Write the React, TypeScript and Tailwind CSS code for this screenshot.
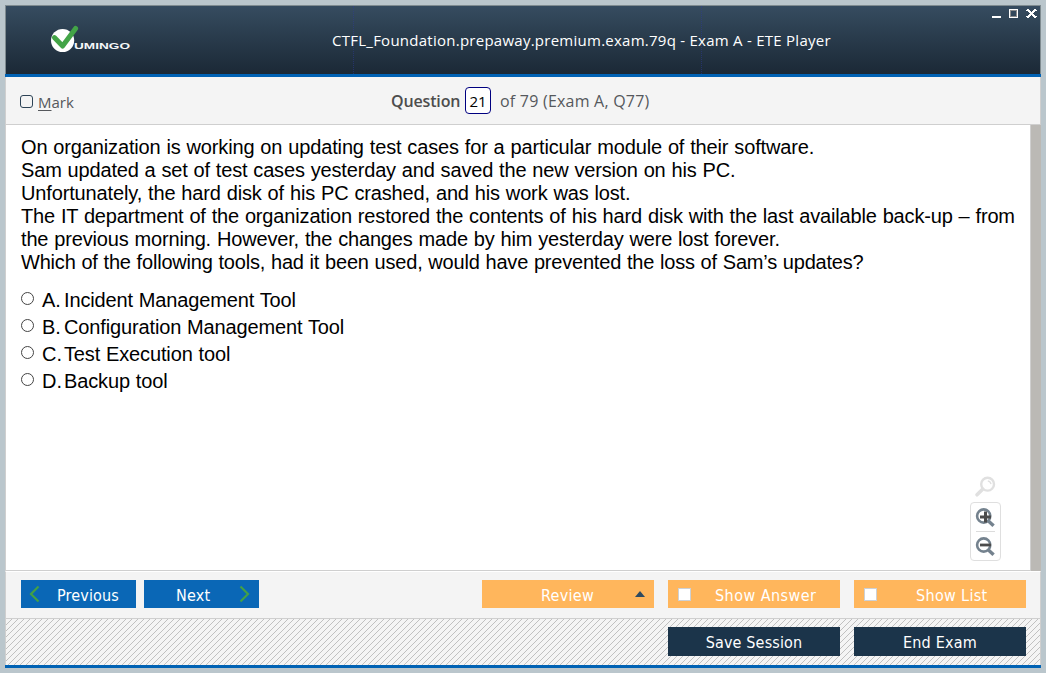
import React from "react";

const seg = "font-['Open_Sans','Noto_Sans',sans-serif]";
const tah = "font-['DejaVu_Sans_Condensed','DejaVu_Sans',sans-serif]";

const lines = [
  { t: "On organization is working on updating test cases for a particular module of their software.", c: "tracking-[-0.143px]" },
  { t: "Sam updated a set of test cases yesterday and saved the new version on his PC.", c: "tracking-[-0.16px]" },
  { t: "Unfortunately, the hard disk of his PC crashed, and his work was lost.", c: "tracking-[-0.14px]" },
  { t: "The IT department of the organization restored the contents of his hard disk with the last available back-up – from", c: "tracking-[-0.157px]" },
  { t: "the previous morning. However, the changes made by him yesterday were lost forever.", c: "tracking-[-0.158px]" },
  { t: "Which of the following tools, had it been used, would have prevented the loss of Sam’s updates?", c: "tracking-[-0.2px]" },
];

const answers = [
  ["A.", "Incident Management Tool"],
  ["B.", "Configuration Management Tool"],
  ["C.", "Test Execution tool"],
  ["D.", "Backup tool"],
];

function Logo() {
  return (
    <svg width="84" height="34" viewBox="0 0 84 34" className="absolute left-[44px] top-[16px]">
      <circle cx="12.6" cy="18.5" r="11.6" fill="#fff" />
      <path d="M4.4 15.6 L12.6 24 L25.6 6.4" fill="none" stroke="#43a447" strokeWidth="5" strokeLinecap="round" strokeLinejoin="round" />
      <text x="24" y="27" fontFamily="Liberation Sans" fontWeight="700" fontSize="9.6" textLength="56" lengthAdjust="spacingAndGlyphs" fill="#f4f6f8">UMINGO</text>
    </svg>
  );
}

function Hatch() {
  return (
    <svg width="1034" height="46" className="absolute left-0 top-0" shapeRendering="crispEdges">
      <defs>
        <pattern id="hatch" width="6" height="6" patternUnits="userSpaceOnUse">
          <path d="M5 0h1v1h-1zM4 1h1v1h-1zM3 2h1v1h-1zM2 3h1v1h-1zM1 4h1v1h-1zM0 5h1v1h-1z" fill="#c0c0c0" />
        </pattern>
      </defs>
      <rect width="1034" height="46" fill="url(#hatch)" />
    </svg>
  );
}

function Chevron({ d }: { d: string }) {
  return (
    <svg width="12" height="18" viewBox="0 0 12 18" className="shrink-0">
      <path d={d} fill="none" stroke="#43a047" strokeWidth="2.2" />
    </svg>
  );
}

function ZoomTools() {
  return (
    <div className="absolute left-[964px] top-[351px] flex w-[31px] flex-col items-center">
      <svg width="24" height="22" viewBox="0 0 24 22" className="mb-[4px]">
        <circle cx="13.6" cy="8.2" r="6.4" fill="none" stroke="#e0e0e0" strokeWidth="2.4" />
        <path d="M13.8 4.8a4 4 0 0 1 3.2 3.4" fill="none" stroke="#e0e0e0" strokeWidth="1.3" />
        <path d="M8.6 13.2L3 18.8" stroke="#e0e0e0" strokeWidth="3.6" strokeLinecap="round" />
      </svg>
      <div className="flex h-[59px] w-[31px] flex-col items-center rounded-[4px] border border-[#dfdfdf] bg-white">
        <svg width="24" height="28" viewBox="0 0 24 28">
          <circle cx="9.7" cy="13" r="6.6" fill="none" stroke="#74828e" strokeWidth="2.6" />
          <path d="M14.4 18l5.2 4.8" stroke="#74828e" strokeWidth="3.4" />
          <path d="M6 14h11M11.5 8.5v11" stroke="#4b4b4b" strokeWidth="3" />
        </svg>
        <div className="h-px w-[19px] bg-[#dcdcdc]" />
        <svg width="24" height="28" viewBox="0 0 24 28">
          <circle cx="9.7" cy="13" r="6.6" fill="none" stroke="#74828e" strokeWidth="2.6" />
          <path d="M14.4 18l5.2 4.8" stroke="#74828e" strokeWidth="3.4" />
          <path d="M6 13h11" stroke="#4b4b4b" strokeWidth="2.8" />
        </svg>
      </div>
    </div>
  );
}

export default function App() {
  return (
    <div className="h-[673px] w-[1046px] overflow-hidden bg-[#bac6cc] pl-[5px] pt-[5px]">
      <div className="flex h-[663px] w-[1036px] flex-col">
        <header className="relative h-[69px] shrink-0 border border-b-0 border-[#7f8b90] bg-linear-to-b from-[#364c60] to-[#1b2936]">
          <Logo />
          <div className="absolute left-[347px] top-0 h-full border-l border-dotted border-[#2c3a9a]/50" />
          <div className="absolute left-[695px] top-0 h-full border-l border-dotted border-[#2c3a9a]/50" />
          <h1 className={`${seg} absolute left-[326px] top-[23px] whitespace-nowrap text-[15px] font-medium leading-[22px] tracking-[0.255px] text-white`}>
            CTFL_Foundation.prepaway.premium.exam.79q - Exam A - ETE Player
          </h1>
          <svg width="48" height="12" viewBox="0 0 48 12" className="absolute left-[985px] top-[2px]" shapeRendering="crispEdges">
            <rect x="1" y="8" width="9" height="2" fill="#fff" />
            <rect x="18.5" y="1.5" width="8" height="8" fill="none" stroke="#fff" />
            <rect x="19.5" y="2.5" width="6" height="6" fill="none" stroke="#8c8c8c" />
            <path d="M36 1.5l9 8M45 1.5l-9 8" stroke="#fff" strokeWidth="2.2" />
          </svg>
        </header>
        <div className="h-[3px] shrink-0 bg-[#0062b4]" />
        <div className={`${seg} flex h-[48px] shrink-0 items-center border-x border-b border-[#cfcfcf] bg-[#f4f4f4] pl-[14px] text-[#55585c]`}>
          <span className="mt-[2px] h-[13px] w-[13px] rounded-[3px] border border-[#2d4356]" />
          <span className="ml-[5px] mt-[3px] w-[353px] text-[15px] leading-[22px]"><u className="underline-offset-2">M</u>ark</span>
          <span className="w-[69px] whitespace-nowrap text-[16px] font-semibold leading-[22px] tracking-[-0.15px] text-[#4d4d4d]">Question</span>
          <span className="ml-[5px] flex h-[27px] w-[26px] items-center justify-center rounded-[4px] border border-[#000080] bg-white text-[15px] leading-[22px] text-black">21</span>
          <span className="ml-[9px] text-[16px] leading-[22px] tracking-[0.22px]">of 79 (Exam A, Q77)</span>
        </div>
        <main className="flex h-[446px] shrink-0 border-l border-[#cfcfcf] bg-white">
          <section className="relative flex-1 border-b border-r border-[#cfcfcf] pl-[15px] pt-[11px] font-['Liberation_Sans',sans-serif] text-[20px] leading-[23px] text-black [word-spacing:0.5px]">
            {lines.map((l) => (
              <p key={l.t} className="whitespace-nowrap"><span className={l.c}>{l.t}</span></p>
            ))}
            <div className="mt-[13px]">
              {answers.map(([k, v]) => (
                <div key={k} className="flex h-[27px] items-center">
                  <span className="mb-[4px] h-[13px] w-[13px] rounded-full border border-[#444]" />
                  <span className="ml-[8px] w-[22px]">{k}</span>
                  <span className="whitespace-nowrap tracking-[-0.14px]">{v}</span>
                </div>
              ))}
            </div>
            <ZoomTools />
          </section>
          <div className="w-[10px] bg-[#bbb9b5]" />
        </main>
        <div className={`${tah} flex h-[48px] shrink-0 border-x border-b border-t border-x-[#cfcfcf] border-b-[#cfcfcf] border-t-white bg-[#f4f4f4] pl-[15px] pt-[8px] text-[16px] leading-[26px] text-white`}>
          <button className="flex h-[28px] w-[115px] items-center bg-[#0a67b6] pl-[7px]">
            <Chevron d="M10.5 1.5L3 9l7.5 7.5" />
            <span className="ml-[17px] pt-[3px] tracking-[0.15px]">Previous</span>
          </button>
          <button className="ml-[8px] flex h-[28px] w-[115px] items-center justify-between bg-[#0a67b6] pl-[32px] pr-[8px]">
            <span className="pt-[3px] tracking-[0.25px]">Next</span>
            <Chevron d="M1.5 1.5L9 9l-7.5 7.5" />
          </button>
          <button className="ml-[223px] flex h-[28px] w-[172px] items-center justify-between bg-[#ffb65c] pl-[59px] pr-[9px]">
            <span className="pt-[3px] tracking-[0.3px]">Review</span>
            <svg width="10" height="6" viewBox="0 0 10 6"><path d="M5 0l5 6H0z" fill="#2d4a60" /></svg>
          </button>
          <button className="ml-[14px] flex h-[28px] w-[172px] items-center bg-[#ffb65c] pl-[10px]">
            <span className="mt-px h-[13px] w-[13px] border border-[#cdd0d4] bg-white" />
            <span className="ml-[24px] whitespace-nowrap pt-[3px] tracking-[0.45px]">Show Answer</span>
          </button>
          <button className="ml-[14px] flex h-[28px] w-[172px] items-center bg-[#ffb65c] pl-[10px]">
            <span className="mt-px h-[13px] w-[13px] border border-[#cdd0d4] bg-white" />
            <span className="ml-[39px] whitespace-nowrap pt-[3px] tracking-[0.33px]">Show List</span>
          </button>
        </div>
        <div className={`${tah} relative flex h-[46px] shrink-0 border-x border-[#cfcfcf] bg-[#f4f4f4] pl-[662px] pt-[8px] text-[16px] text-white`}>
          <Hatch />
          <button className="relative h-[29px] w-[172px] bg-[#1b344a] pt-[2px] leading-[27px] tracking-[0.15px]">Save Session</button>
          <button className="relative ml-[14px] h-[29px] w-[172px] bg-[#1b344a] pt-[2px] leading-[27px] tracking-[0.2px]">End Exam</button>
        </div>
        <div className="h-[3px] shrink-0 bg-[#0062b4]" />
      </div>
    </div>
  );
}
